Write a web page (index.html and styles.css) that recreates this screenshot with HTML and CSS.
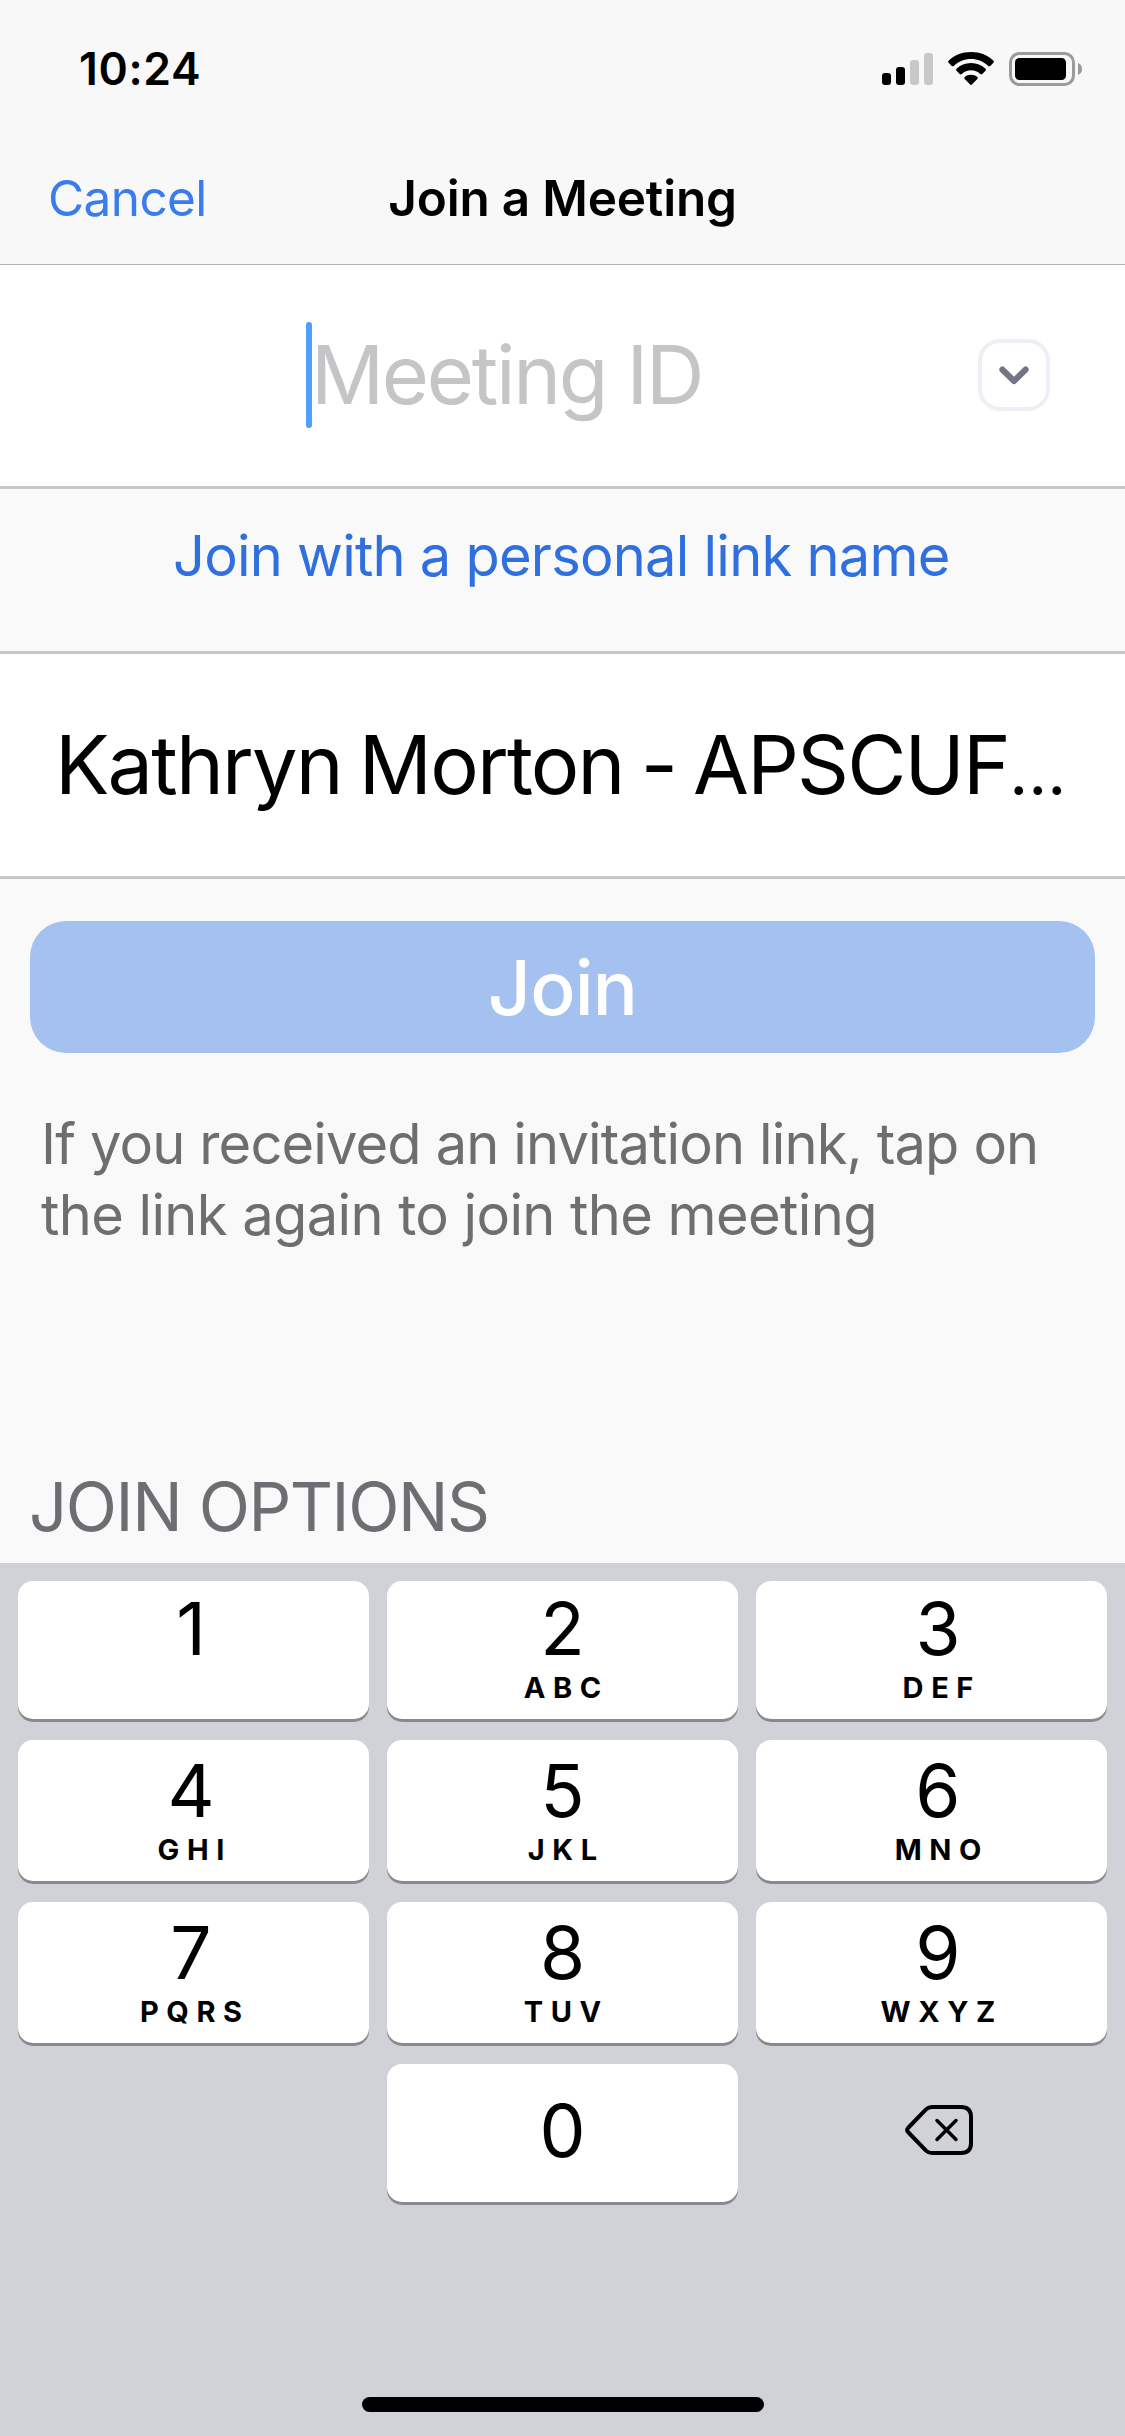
FILE: index.html
```html
<!DOCTYPE html>
<html lang="en">
<head>
  <meta charset="UTF-8">
  <title>Join a Meeting</title>
  <meta name="viewport" content="width=device-width, initial-scale=1">
  <link rel="stylesheet" href="styles.css">
</head>
<body>
  <header>
    <div class="status-bar">
      <span class="time">10:24</span>
      <div class="status-icons">
        <svg class="signal" width="51" height="34" viewBox="0 0 51 34">
          <rect x="0" y="21" width="9" height="12" rx="3"/>
          <rect x="14" y="15" width="9" height="18" rx="3"/>
          <rect class="off" x="28" y="8" width="9" height="25" rx="3"/>
          <rect class="off" x="42" y="1" width="9" height="32" rx="3"/>
        </svg>
        <svg class="wifi" width="46" height="34" viewBox="0 0 46 34">
          <path d="M23 0C32 0 39.800 3.300 45.400 8.700Q46.400 9.800 45.400 10.800L42.300 13.900Q41.300 14.800 40.200 13.900C35.500 9.500 29.600 7 23 7S10.500 9.500 5.800 13.900Q4.700 14.800 3.700 13.900L.600 10.800Q-.400 9.800 .600 8.700C6.200 3.300 14 0 23 0Z"/>
          <path d="M23 11C28.700 11 33.700 13.200 37.500 16.800Q38.500 17.800 37.500 18.800L34.300 22Q33.300 22.900 32.200 22C29.700 19.600 26.600 18.300 23 18.300S16.300 19.600 13.800 22Q12.700 22.900 11.700 22L8.500 18.800Q7.500 17.800 8.500 16.800C12.300 13.200 17.300 11 23 11Z"/>
          <path d="M23 22.700C25.400 22.700 27.700 23.600 29.300 25Q30.300 26 29.300 27L23.900 32.500Q23 33.400 22.100 32.500L16.700 27Q15.700 26 16.700 25C18.300 23.600 20.600 22.700 23 22.700Z"/>
        </svg>
        <svg class="battery" width="73" height="34" viewBox="0 0 73 34">
          <rect class="shell" x="1.500" y="1.500" width="63" height="31" rx="9"/>
          <rect x="6" y="6" width="51" height="22" rx="4.500"/>
          <path class="nub" d="M69 11C71.600 12 73 14.300 73 17S71.600 22 69 23Z"/>
        </svg>
      </div>
    </div>
    <nav>
      <a class="cancel">Cancel</a>
      <h1>Join a Meeting</h1>
    </nav>
  </header>

  <main>
    <div class="field meeting-id">
      <span class="caret"></span>
      <span class="placeholder">Meeting ID</span>
      <button class="history" aria-label="Recent meetings">
        <svg width="30" height="20" viewBox="0 0 30 20">
          <path d="M3.300 4.500 15 16 26.700 4.500"/>
        </svg>
      </button>
    </div>

    <a class="link-name">Join with a personal link name</a>

    <div class="field user-name">Kathryn Morton - APSCUF<span class="ellipsis">…</span></div>

    <button class="join">Join</button>

    <p class="hint">If you received an invitation link, tap on<br><span class="second">the link again to join the meeting</span></p>

    <h2>JOIN OPTIONS</h2>
  </main>

  <section class="keyboard">
    <div class="keys">
      <button class="key left"><b>1</b><i></i></button>
      <button class="key"><b>2</b><i>ABC</i></button>
      <button class="key right"><b>3</b><i>DEF</i></button>
      <button class="key left"><b>4</b><i>GHI</i></button>
      <button class="key"><b>5</b><i>JKL</i></button>
      <button class="key right"><b>6</b><i>MNO</i></button>
      <button class="key left"><b>7</b><i>PQRS</i></button>
      <button class="key"><b>8</b><i>TUV</i></button>
      <button class="key right"><b>9</b><i>WXYZ</i></button>
      <button class="key zero"><b>0</b></button>
      <button class="delete" aria-label="Delete">
        <svg width="68" height="50" viewBox="0 0 68 50">
          <path d="M27 2H56Q66 2 66 12V38Q66 48 56 48H27Q23.500 48 21 45.600L3 27Q1.300 25 3 23L21 4.400Q23.500 2 27 2Z"/>
          <path class="cross" d="M32 15.500 51 34.500M51 15.500 32 34.500"/>
        </svg>
      </button>
    </div>
    <div class="home-indicator"></div>
  </section>
</body>
</html>
```
FILE: styles.css
```css
* {
  box-sizing: border-box;
}

body {
  margin: 0;
  width: 1125px;
  height: 2436px;
  display: flex;
  flex-direction: column;
  overflow: hidden;
  font-family: Inter, 'Liberation Sans', sans-serif;
  background: #f9f9f9;
  color: #000;
}

button {
  border: none;
  padding: 0;
  font-family: inherit;
  color: inherit;
}

h1, h2, p {
  margin: 0;
}

svg {
  display: block;
}

header {
  height: 265px;
  background: #f8f8f8;
  border-bottom: 1px solid #b2b2b2;
}

.status-bar {
  height: 132px;
  padding: 6px 43px 0 79px;
  display: flex;
  justify-content: space-between;
  align-items: center;
}

.time {
  font-size: 44.5px;
  font-weight: 600;
  letter-spacing: 0.65px;
}

.status-icons {
  display: flex;
}

.signal .off {
  fill: #c8c8c8;
}

.wifi {
  margin: 0 15px;
}

.battery .shell {
  fill: none;
  stroke: #9b9b9b;
  stroke-width: 3;
}

.battery .nub {
  fill: #9b9b9b;
}

nav {
  height: 132px;
  padding: 0 48px;
  display: grid;
  grid-template-columns: 1fr auto 1fr;
  align-items: center;
}

.cancel {
  font-size: 49.5px;
  letter-spacing: -0.6px;
  color: #387cf0;
}

h1 {
  font-size: 49.5px;
  font-weight: 600;
  letter-spacing: -0.2px;
}

.field {
  display: flex;
  align-items: center;
  background: #fff;
  border-bottom: 3px solid #c8c8c8;
  font-size: 81px;
  white-space: nowrap;
}

.meeting-id {
  height: 224px;
  padding: 0 75px 2px 306px;
}

.caret {
  width: 6px;
  height: 106px;
  margin-right: -1px;
  border-radius: 3px;
  background: #4f9ffa;
}

.placeholder {
  color: #c5c5c7;
  letter-spacing: -2.31px;
}

.history {
  width: 72px;
  height: 72px;
  margin-left: auto;
  display: flex;
  justify-content: center;
  align-items: center;
  background: #fff;
  border: 4px solid #eeeef4;
  border-radius: 22px;
}

.history path {
  fill: none;
  stroke: #747487;
  stroke-width: 6;
  stroke-linecap: round;
  stroke-linejoin: round;
}

.link-name {
  height: 162px;
  padding: 0 0 29px 173px;
  display: flex;
  align-items: center;
  font-size: 56px;
  letter-spacing: -0.77px;
  color: #2f6fe0;
}

.user-name {
  height: 228px;
  padding-left: 55px;
  border-top: 3px solid #c8c8c8;
  letter-spacing: -1.8px;
  word-spacing: -4px;
}

.ellipsis {
  font-size: 66px;
  padding-top: 11px;
}

.join {
  display: block;
  width: 1065px;
  height: 132px;
  margin: 42px 30px 56px;
  border-radius: 36px;
  background: #a4c1ef;
  color: #fff;
  font-size: 75px;
  font-weight: 500;
  letter-spacing: -0.8px;
}

.hint {
  padding-left: 41px;
  font-size: 56px;
  line-height: 71px;
  letter-spacing: -0.86px;
  color: #6e6e70;
}

.hint .second {
  letter-spacing: -0.6px;
}

h2 {
  margin-top: 199px;
  padding-left: 29px;
  font-size: 67px;
  font-weight: 400;
  line-height: 113px;
  letter-spacing: -1.43px;
  color: #6d6d72;
}

.keyboard {
  flex: 1;
  padding: 18px 18px 0;
  background: #d1d2d8;
}

.keys {
  display: grid;
  grid-template-columns: repeat(3, 351px);
  grid-template-rows: 138px 141px 141px 138px;
  gap: 21px 18px;
}

.key {
  display: flex;
  flex-direction: column;
  justify-content: flex-end;
  align-items: center;
  gap: 22px;
  padding-bottom: 21px;
  border-radius: 15px;
  background: #fff;
  box-shadow: 0 3px 0 #898a8d;
}

.key b {
  font-size: 73px;
  font-weight: 400;
  line-height: 53px;
}

.key i {
  height: 21px;
  padding-left: 7.6px;
  font-size: 29px;
  font-style: normal;
  font-weight: 700;
  line-height: 21px;
  letter-spacing: 7.6px;
}

.left {
  padding-right: 5px;
}

.right {
  padding-left: 13px;
}

.zero {
  grid-column: 2;
  padding-bottom: 45px;
}

.delete {
  display: flex;
  justify-content: center;
  align-items: center;
  padding: 0 0 6px 15px;
  background: none;
}

.delete path {
  fill: none;
  stroke: #000;
  stroke-width: 4;
  stroke-linejoin: round;
}

.delete .cross {
  stroke-width: 3.5;
  stroke-linecap: round;
}

.home-indicator {
  width: 402px;
  height: 15px;
  margin: 195px auto 0;
  border-radius: 8px;
  background: #000;
}
```
